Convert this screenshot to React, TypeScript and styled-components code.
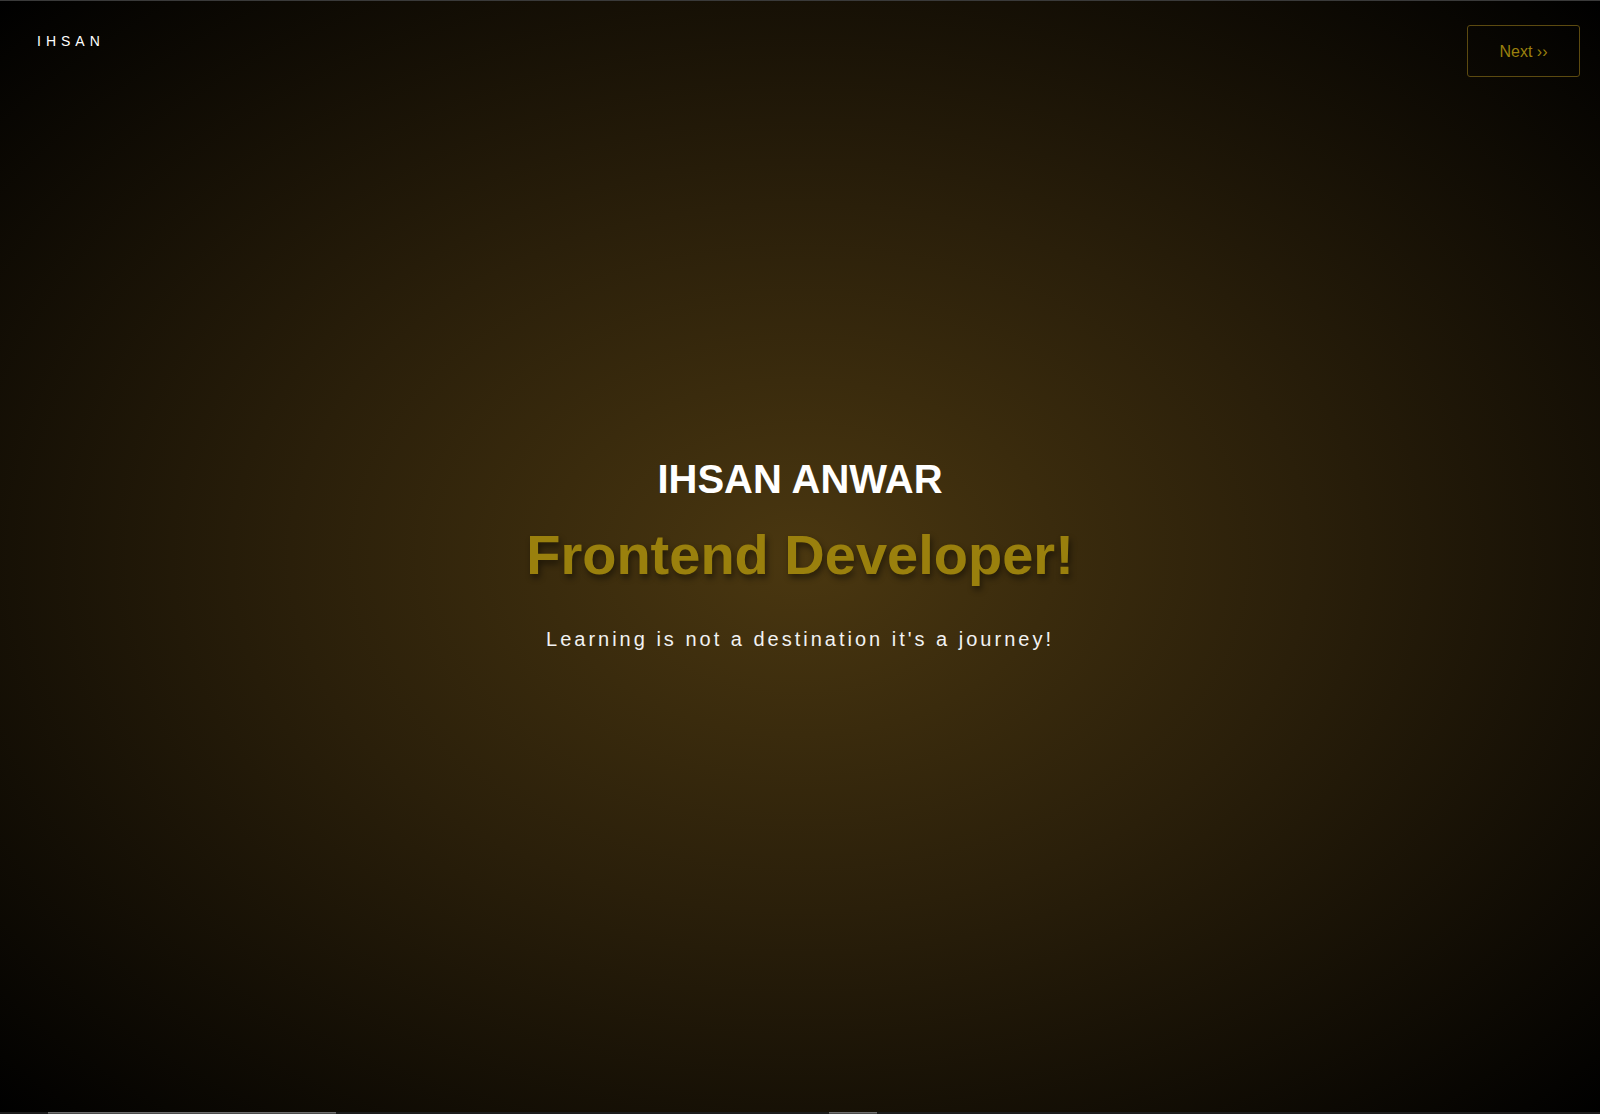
import React from "react";
import styled, { createGlobalStyle } from "styled-components";

const GlobalStyle = createGlobalStyle`
  html, body { margin: 0; padding: 0; background: #000; }
  body { font-family: "Liberation Sans", Arial, sans-serif; }
  * { box-sizing: border-box; }
`;

const Page = styled.div`
  height: 1114px;
  display: flex;
  flex-direction: column;
  border-top: 1px solid #3a3a3a;
  background: radial-gradient(ellipse at center, #4a3710 0%, #2a1f0a 45%, #000 100%);
  overflow: hidden;
`;

const Stage = styled.div`
  flex: 1;
  display: grid;
  grid-template-areas: "stack";
`;

const Header = styled.header`
  grid-area: stack;
  align-self: start;
  display: flex;
  justify-content: space-between;
  align-items: flex-start;
  padding: 24px 20px 0 37px;
`;

const Brand = styled.div`
  margin-top: 8px;
  color: #ffffff;
  font-size: 14px;
  letter-spacing: 5px;
  line-height: 16px;
`;

const NextButton = styled.button`
  width: 113px;
  height: 52px;
  padding-top: 2px;
  background: transparent;
  border: 1px solid #5c4a10;
  border-radius: 3px;
  color: #9a800d;
  font-family: "Liberation Sans", Arial, sans-serif;
  font-size: 16px;
  cursor: pointer;
`;

const Hero = styled.main`
  grid-area: stack;
  align-self: center;
  display: flex;
  flex-direction: column;
  align-items: center;
  text-align: center;
  padding-bottom: 6px;
`;

const Name = styled.h1`
  margin: 0;
  color: #ffffff;
  font-size: 40px;
  font-weight: 700;
  line-height: 46px;
`;

const Role = styled.h2`
  margin: 21px 0 0;
  color: #9a800d;
  font-size: 56px;
  font-weight: 700;
  line-height: 64px;
  text-shadow: 2px 4px 6px rgba(0, 0, 0, 0.45);
`;

const Tagline = styled.p`
  margin: 41px 0 0;
  color: #f2f2f2;
  font-size: 20px;
  letter-spacing: 3px;
  line-height: 23px;
`;

const Track = styled.div`
  height: 2px;
  background: #1c1c1c;
  display: flex;
`;

const Segment = styled.div<{ $start: number; $width: number }>`
  margin-left: ${(p) => p.$start}px;
  width: ${(p) => p.$width}px;
  background: #4c4c4c;
  border-top: 1px solid #6e6e6e;
`;

export default function App() {
  return (
    <>
      <GlobalStyle />
      <Page>
        <Stage>
          <Header>
            <Brand>IHSAN</Brand>
            <NextButton>Next ››</NextButton>
          </Header>
          <Hero>
            <Name>IHSAN ANWAR</Name>
            <Role>Frontend Developer!</Role>
            <Tagline>Learning is not a destination it's a journey!</Tagline>
          </Hero>
        </Stage>
        <Track>
          <Segment $start={48} $width={288} />
          <Segment $start={493} $width={48} />
        </Track>
      </Page>
    </>
  );
}
